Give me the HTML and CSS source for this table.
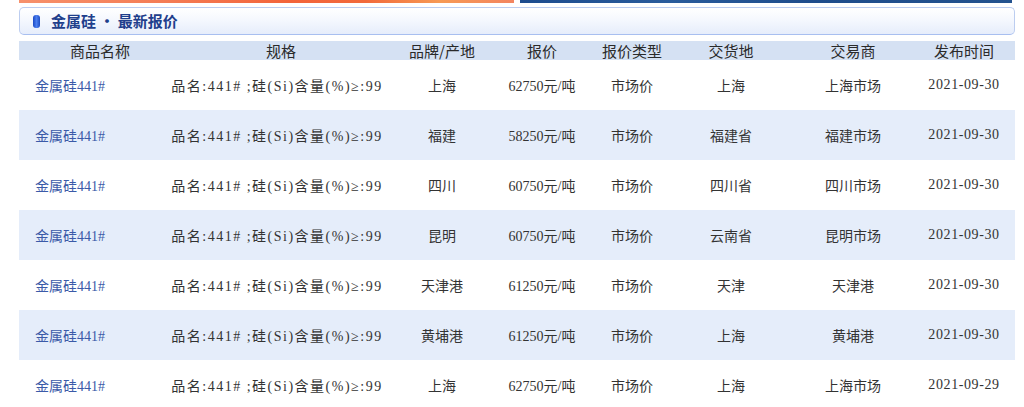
FILE: index.html
```html
<!DOCTYPE html>
<html lang="zh-CN">
<head>
<meta charset="utf-8">
<title>金属硅 · 最新报价</title>
<link rel="stylesheet" href="styles.css">
</head>
<body>
<div class="page">
  <div class="banner-edge">
    <div class="edge-orange"></div>
    <div class="edge-blue"></div>
  </div>
  <div class="title-box">
    <span class="title-icon"></span>
    <h2 class="title">金属硅 · 最新报价</h2>
  </div>
  <div class="price-table">
    <div class="row head">
      <div class="c c1">商品名称</div>
      <div class="c">规格</div>
      <div class="c">品牌/产地</div>
      <div class="c">报价</div>
      <div class="c">报价类型</div>
      <div class="c">交货地</div>
      <div class="c">交易商</div>
      <div class="c c8">发布时间</div>
    </div>
    <div class="row">
      <div class="c c1 name"><a href="#">金属硅441#</a></div>
      <div class="c spec">品名:441# ;硅(Si)含量(%)≥:99</div>
      <div class="c">上海</div>
      <div class="c">62750元/吨</div>
      <div class="c">市场价</div>
      <div class="c">上海</div>
      <div class="c">上海市场</div>
      <div class="c c8 date">2021-09-30</div>
    </div>
    <div class="row alt">
      <div class="c c1 name"><a href="#">金属硅441#</a></div>
      <div class="c spec">品名:441# ;硅(Si)含量(%)≥:99</div>
      <div class="c">福建</div>
      <div class="c">58250元/吨</div>
      <div class="c">市场价</div>
      <div class="c">福建省</div>
      <div class="c">福建市场</div>
      <div class="c c8 date">2021-09-30</div>
    </div>
    <div class="row">
      <div class="c c1 name"><a href="#">金属硅441#</a></div>
      <div class="c spec">品名:441# ;硅(Si)含量(%)≥:99</div>
      <div class="c">四川</div>
      <div class="c">60750元/吨</div>
      <div class="c">市场价</div>
      <div class="c">四川省</div>
      <div class="c">四川市场</div>
      <div class="c c8 date">2021-09-30</div>
    </div>
    <div class="row alt">
      <div class="c c1 name"><a href="#">金属硅441#</a></div>
      <div class="c spec">品名:441# ;硅(Si)含量(%)≥:99</div>
      <div class="c">昆明</div>
      <div class="c">60750元/吨</div>
      <div class="c">市场价</div>
      <div class="c">云南省</div>
      <div class="c">昆明市场</div>
      <div class="c c8 date">2021-09-30</div>
    </div>
    <div class="row">
      <div class="c c1 name"><a href="#">金属硅441#</a></div>
      <div class="c spec">品名:441# ;硅(Si)含量(%)≥:99</div>
      <div class="c">天津港</div>
      <div class="c">61250元/吨</div>
      <div class="c">市场价</div>
      <div class="c">天津</div>
      <div class="c">天津港</div>
      <div class="c c8 date">2021-09-30</div>
    </div>
    <div class="row alt">
      <div class="c c1 name"><a href="#">金属硅441#</a></div>
      <div class="c spec">品名:441# ;硅(Si)含量(%)≥:99</div>
      <div class="c">黄埔港</div>
      <div class="c">61250元/吨</div>
      <div class="c">市场价</div>
      <div class="c">上海</div>
      <div class="c">黄埔港</div>
      <div class="c c8 date">2021-09-30</div>
    </div>
    <div class="row">
      <div class="c c1 name"><a href="#">金属硅441#</a></div>
      <div class="c spec">品名:441# ;硅(Si)含量(%)≥:99</div>
      <div class="c">上海</div>
      <div class="c">62750元/吨</div>
      <div class="c">市场价</div>
      <div class="c">上海</div>
      <div class="c">上海市场</div>
      <div class="c c8 date">2021-09-29</div>
    </div>
  </div>
</div>
</body>
</html>
```

FILE: styles.css
```css
html, body {
  margin: 0;
  padding: 0;
  background: #ffffff;
}

body {
  font-family: "Liberation Serif", "Noto Sans CJK SC", serif;
  font-size: 14px;
  color: #333333;
  overflow: hidden;
}

.page {
  margin-left: 19px;
  width: 996px;
}

.banner-edge {
  display: flex;
  height: 3px;
}

.edge-orange {
  width: 495px;
  background: linear-gradient(90deg, #f7916c 0%, #f47c55 30%, #f3643a 55%, #f26a3c 70%, #f79a55 85%, #f38560 100%);
}

.edge-blue {
  width: 492px;
  margin-left: 6px;
  background: linear-gradient(90deg, #1d4c8e 0%, #2a5c9c 30%, #1f4d8c 60%, #24538f 100%);
}

.title-box {
  margin-top: 4px;
  height: 26px;
  border: 1px solid #bccdf0;
  border-bottom-color: #a8bff0;
  border-radius: 5px;
  background: linear-gradient(180deg, #ffffff 0%, #f5f8fe 45%, #e6edfb 100%);
  display: flex;
  align-items: center;
  padding-left: 13px;
}

.title-icon {
  width: 7px;
  height: 13px;
  border-radius: 3px;
  background: linear-gradient(90deg, #1a49c4 0%, #4a7ef0 50%, #1d4cc2 100%);
  margin-right: 11px;
}

.title {
  margin: 0;
  font-family: "Noto Sans CJK SC", sans-serif;
  font-size: 15px;
  font-weight: bold;
  color: #1f3f8c;
  line-height: 26px;
}

.price-table {
  margin-top: 6px;
}

.row {
  display: grid;
  grid-template-columns: 162px 200px 122px 78px 102px 96px 148px 88px;
  height: 50px;
  align-items: center;
}

.row.alt {
  background: #e5edfa;
}

.row.head {
  height: 19px;
  background: #d5e1f3;
  font-family: "Noto Sans CJK SC", sans-serif;
  font-size: 15px;
  color: #2a2a2a;
  line-height: 19px;
}

.c {
  justify-self: center;
  white-space: nowrap;
}

.c8 {
  justify-self: stretch;
  text-align: center;
  padding-right: 14px;
}

.spec {
  letter-spacing: 1.5px;
  margin-right: 8px;
}

.date {
  letter-spacing: 0.6px;
}

.name {
  justify-self: start;
  padding-left: 16px;
}

.name a {
  color: #3b5aa8;
  text-decoration: none;
}
```
